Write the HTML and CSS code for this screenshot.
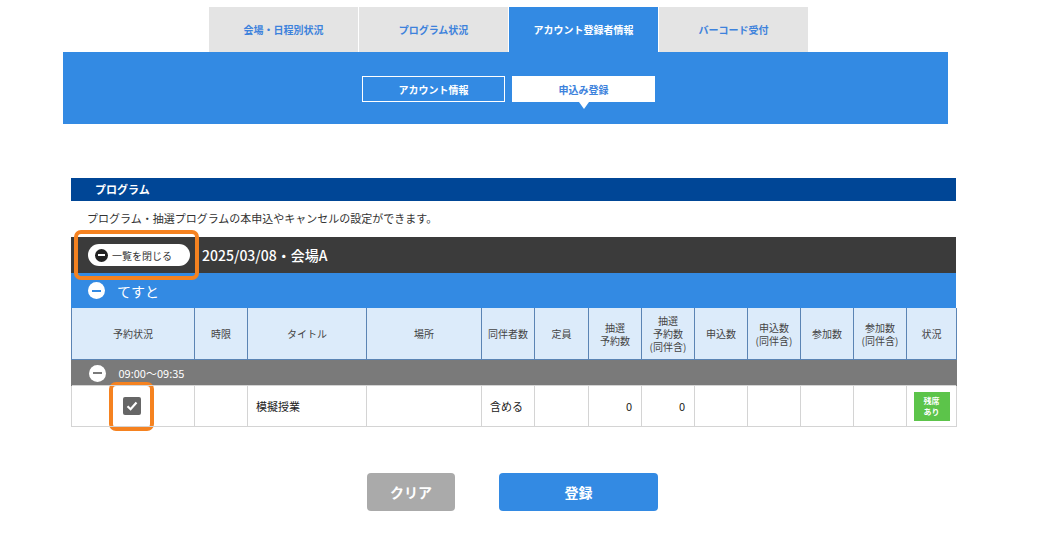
FILE: index.html
```html
<!DOCTYPE html>
<html lang="ja">
<head>
    <meta charset="UTF-8">
    <meta name="viewport" content="width=device-width, initial-scale=1.0">
    <title>申込み登録</title>
    <link rel="stylesheet" href="styles.css">
</head>
<body>
    <div class="tabs">
        <a class="tab">会場・日程別状況</a>
        <a class="tab">プログラム状況</a>
        <a class="tab active">アカウント登録者情報</a>
        <a class="tab">バーコード受付</a>
    </div>

    <div class="sub-band">
        <a class="sub-btn">アカウント情報</a>
        <a class="sub-btn current">申込み登録</a>
    </div>

    <div class="main">
        <div class="section-title">プログラム</div>
        <p class="description">プログラム・抽選プログラムの本申込やキャンセルの設定ができます。</p>

        <div class="date-bar">
            <div class="highlight close-wrap">
                <button type="button" class="close-btn"><span class="dot-minus"></span>一覧を閉じる</button>
            </div>
            <span class="date-text">2025/03/08・会場A</span>
        </div>

        <div class="group-bar">
            <span class="circle-minus blue"></span>
            <span>てすと</span>
        </div>

        <table class="program-table">
            <colgroup>
                <col style="width:123px"><col style="width:53px"><col style="width:119px"><col style="width:115px">
                <col style="width:53px"><col style="width:54px"><col style="width:53px"><col style="width:53px">
                <col style="width:53px"><col style="width:53px"><col style="width:53px"><col style="width:53px">
                <col style="width:50px">
            </colgroup>
            <thead>
                <tr>
                    <th>予約状況</th>
                    <th>時限</th>
                    <th>タイトル</th>
                    <th>場所</th>
                    <th>同伴者数</th>
                    <th>定員</th>
                    <th>抽選<br>予約数</th>
                    <th>抽選<br>予約数<br>(同伴含)</th>
                    <th>申込数</th>
                    <th>申込数<br>(同伴含)</th>
                    <th>参加数</th>
                    <th>参加数<br>(同伴含)</th>
                    <th>状況</th>
                </tr>
            </thead>
            <tbody>
                <tr class="time-row">
                    <td colspan="13">
                        <span class="circle-minus gray"></span>
                        <span>09:00〜09:35</span>
                    </td>
                </tr>
                <tr class="data-row">
                    <td class="center">
                        <div class="highlight check-wrap">
                            <span class="checkbox">
                                <svg width="12" height="10" viewBox="0 0 12 10"><path d="M1.5 5.2 L4.6 8.2 L10.5 1.6" fill="none" stroke="#fff" stroke-width="2.2"/></svg>
                            </span>
                        </div>
                    </td>
                    <td></td>
                    <td>模擬授業</td>
                    <td></td>
                    <td>含める</td>
                    <td></td>
                    <td class="num">0</td>
                    <td class="num">0</td>
                    <td></td>
                    <td></td>
                    <td></td>
                    <td></td>
                    <td class="center"><span class="badge">残席<br>あり</span></td>
                </tr>
            </tbody>
        </table>
    </div>

    <div class="actions">
        <button type="button" class="clear-btn">クリア</button>
        <button type="button" class="submit-btn">登録</button>
    </div>
</body>
</html>
```

FILE: styles.css
```css
body {
    font-family: "Noto Sans CJK JP", "Noto Sans", sans-serif;
    margin: 0;
    color: #333;
    background: #fff;
}
.tabs {
    display: flex;
    gap: 1px;
    margin-left: 209px;
    padding-top: 7px;
}
.tab {
    width: 149px;
    height: 45px;
    display: flex;
    align-items: center;
    justify-content: center;
    background-color: #e4e4e4;
    color: #3d82dc;
    font-size: 10px;
    font-weight: bold;
}
.tab.active {
    background-color: #338ae3;
    color: #fff;
}
.sub-band {
    width: 885px;
    height: 72px;
    margin-left: 63px;
    background-color: #338ae3;
    display: flex;
    gap: 7px;
    padding-left: 299px;
    padding-top: 24px;
    box-sizing: border-box;
}
.sub-btn {
    position: relative;
    width: 143px;
    height: 26px;
    box-sizing: border-box;
    border: 1px solid #fff;
    color: #fff;
    font-size: 10px;
    font-weight: bold;
    display: flex;
    align-items: center;
    justify-content: center;
}
.sub-btn.current {
    background-color: #fff;
    color: #3d82dc;
}
.sub-btn.current::after {
    content: "";
    position: absolute;
    left: 66px;
    top: 25px;
    border-left: 5px solid transparent;
    border-right: 5px solid transparent;
    border-top: 7px solid #fff;
}
.main {
    width: 885px;
    margin: 54px 0 0 71px;
}
.section-title {
    background-color: #004696;
    color: #fff;
    font-size: 11px;
    font-weight: bold;
    height: 23px;
    line-height: 23px;
    padding-left: 24px;
}
.description {
    margin: 0;
    height: 36px;
    line-height: 34px;
    font-size: 11px;
    padding-left: 16px;
    color: #333;
}
.date-bar {
    background-color: #3b3b3b;
    height: 36px;
    display: flex;
    align-items: center;
    color: #fff;
}
.highlight {
    border: 4px solid #f58220;
    border-radius: 7px;
}
.close-wrap {
    margin-left: 3px;
    width: 125px;
    height: 50px;
    flex-shrink: 0;
    box-sizing: border-box;
    display: flex;
    align-items: center;
    padding-left: 10px;
}
.close-btn {
    background: #fff;
    border: none;
    border-radius: 12px;
    height: 22px;
    width: 102px;
    padding: 0 0 0 7px;
    display: flex;
    align-items: center;
    gap: 4px;
    font-family: inherit;
    font-size: 10px;
    color: #333;
}
.dot-minus {
    width: 13px;
    height: 13px;
    border-radius: 50%;
    background: #222;
    position: relative;
}
.dot-minus::after {
    content: "";
    position: absolute;
    left: 3px;
    right: 3px;
    top: 5.5px;
    height: 2px;
    background: #fff;
}
.date-text {
    font-size: 14px;
    font-weight: 500;
    margin-left: 3px;
}
.group-bar {
    background-color: #338ae3;
    height: 35px;
    display: flex;
    align-items: center;
    gap: 12px;
    padding-left: 17px;
    color: #fff;
    font-size: 14px;
}
.circle-minus {
    width: 17px;
    height: 17px;
    border-radius: 50%;
    background: #fff;
    position: relative;
    display: inline-block;
}
.circle-minus::after {
    content: "";
    position: absolute;
    left: 4px;
    right: 4px;
    top: 7.5px;
    height: 2px;
}
.circle-minus.blue::after {
    background: #338ae3;
}
.circle-minus.gray::after {
    background: #7a7a7a;
}
.program-table {
    width: 885px;
    border-collapse: collapse;
    table-layout: fixed;
    font-size: 10px;
}
.program-table th {
    background-color: #dcebfa;
    border: 1px solid #5b84b4;
    border-top: none;
    height: 51px;
    padding: 0;
    font-weight: normal;
    line-height: 13px;
    color: #444;
    font-size: 10px;
}
.time-row td {
    background-color: #7a7a7a;
    color: #fff;
    height: 25px;
    padding: 0 0 0 17px;
    font-size: 11px;
    border-left: 1px solid #7a7a7a;
    border-right: 1px solid #7a7a7a;
}
.time-row td span {
    vertical-align: middle;
}
.time-row .circle-minus {
    margin-right: 10px;
}
.data-row td {
    border: 1px solid #d4d4d4;
    height: 40px;
    padding: 0 8px;
    font-size: 11px;
    color: #222;
}
.data-row td.num {
    text-align: right;
    padding-right: 9px;
}
.data-row td.center {
    text-align: center;
    padding: 0;
}
.check-wrap {
    width: 45px;
    height: 49px;
    box-sizing: border-box;
    display: flex;
    align-items: center;
    justify-content: center;
    margin: -5px 0 -5px 37px;
}
.checkbox {
    width: 18px;
    height: 18px;
    background: #666;
    border-radius: 2px;
    display: flex;
    align-items: center;
    justify-content: center;
}
.badge {
    display: inline-block;
    width: 36px;
    height: 29px;
    background: #5cc44a;
    color: #fff;
    font-size: 8px;
    font-weight: bold;
    line-height: 11px;
    padding-top: 3px;
    box-sizing: border-box;
    vertical-align: middle;
}
.actions {
    display: flex;
    gap: 44px;
    margin: 46px 0 0 367px;
}
.clear-btn, .submit-btn {
    height: 38px;
    border: none;
    border-radius: 4px;
    color: #fff;
    font-family: inherit;
    font-size: 14px;
    font-weight: bold;
}
.clear-btn {
    width: 88px;
    background-color: #aaa;
}
.submit-btn {
    width: 159px;
    background-color: #338ae3;
}
```
